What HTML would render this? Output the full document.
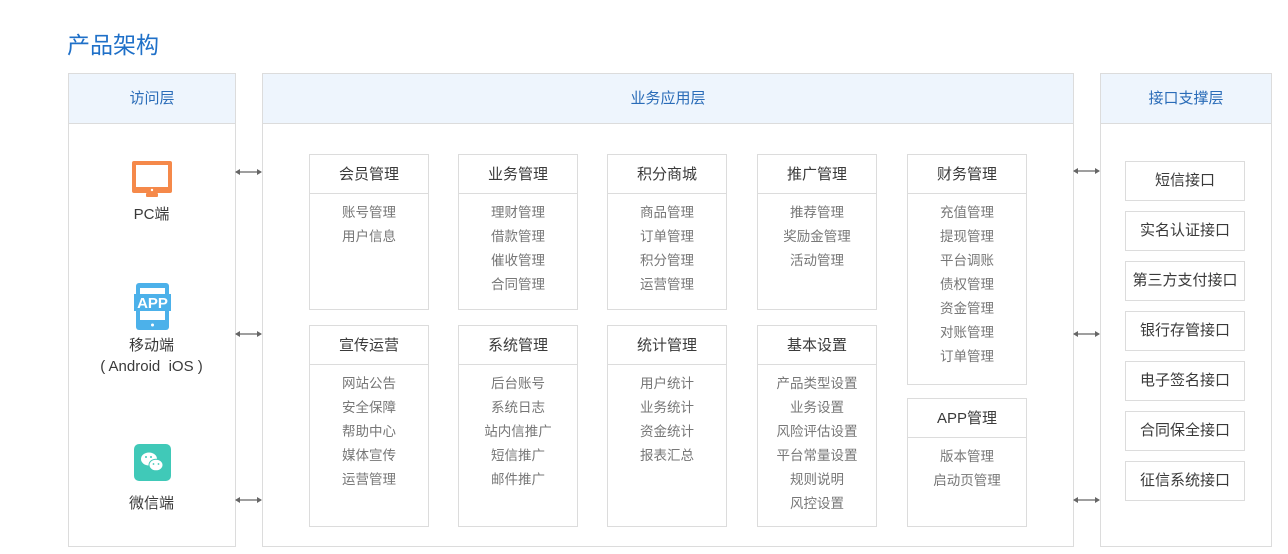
<!DOCTYPE html>
<html><head><meta charset="utf-8"><style>
*{margin:0;padding:0;box-sizing:border-box}
body{width:1288px;height:554px;background:#fff;font-family:"Liberation Sans","Noto Sans CJK SC",sans-serif;position:relative;overflow:hidden}
.a{position:absolute}
.title{left:67px;top:26px;font-size:23px;color:#1f70c8}
.panel{position:absolute;border:1px solid #dcdcdc;top:73px;height:474px}
.ph{height:50px;background:#eef5fd;border-bottom:1px solid #dcdcdc;text-align:center;line-height:50px;font-size:15px;color:#2a6cb8}
.m{position:absolute;border:1px solid #dcdcdc;width:120px;text-align:center}
.mh{height:39px;line-height:39px;border-bottom:1px solid #dcdcdc;font-size:15px;color:#3a3a3a}
.mi{padding-top:7px;font-size:13.5px;color:#777;line-height:24px}
.r{position:absolute;left:1125px;width:120px;height:40px;border:1px solid #dcdcdc;text-align:center;line-height:38px;font-size:15px;color:#3a3a3a}
.lbl{position:absolute;left:68px;width:167px;text-align:center;font-size:15px;color:#3a3a3a}
.arr{position:absolute;width:27px;height:8px}
</style></head><body>
<div class="a title">产品架构</div>
<div class="panel" style="left:68px;width:168px"><div class="ph">访问层</div></div>
<div class="panel" style="left:262px;width:812px"><div class="ph">业务应用层</div></div>
<div class="panel" style="left:1100px;width:172px"><div class="ph">接口支撑层</div></div>

<svg class="a" style="left:132px;top:161px" width="40" height="37" viewBox="0 0 40 37"><rect x="0" y="0" width="40" height="32" rx="2" fill="#f5894a"/><rect x="4" y="4" width="32" height="22" fill="#fff"/><circle cx="20" cy="29" r="1.2" fill="#fff"/><rect x="14" y="32" width="12" height="4" rx="1" fill="#f5894a"/></svg>
<div class="lbl" style="top:203px">PC端</div>
<svg class="a" style="left:134px;top:283px" width="37" height="47" viewBox="0 0 37 47"><rect x="2" y="0" width="33" height="47" rx="3" fill="#4cb1ea"/><rect x="6" y="5" width="25" height="32" fill="#fff"/><rect x="0" y="11" width="37" height="17" fill="#4cb1ea"/><text x="18.5" y="25" font-size="15" font-weight="bold" fill="#fff" text-anchor="middle" font-family="Liberation Sans">APP</text><circle cx="18.5" cy="42" r="1.5" fill="#fff"/></svg>
<div class="lbl" style="top:334px">移动端</div>
<div class="lbl" style="top:358px">( Android&nbsp; iOS )</div>
<svg class="a" style="left:134px;top:444px" width="37" height="37" viewBox="0 0 37 37"><rect width="37" height="37" rx="5" fill="#40c9b8"/><ellipse cx="15" cy="15" rx="8" ry="6.5" fill="#fff"/><ellipse cx="22" cy="21" rx="7" ry="5.8" fill="#fff" stroke="#40c9b8" stroke-width="1"/><circle cx="12" cy="13" r="1" fill="#40c9b8"/><circle cx="17" cy="13" r="1" fill="#40c9b8"/><circle cx="19.5" cy="20" r=".9" fill="#40c9b8"/><circle cx="24.5" cy="20" r=".9" fill="#40c9b8"/></svg>
<div class="lbl" style="top:492px">微信端</div>

<svg class="arr" style="left:235px;top:168px" viewBox="0 0 27 8"><path d="M1 4H26" stroke="#666" stroke-width="1.2"/><path d="M0 4L5 1V7Z M27 4L22 1V7Z" fill="#666"/></svg>
<svg class="arr" style="left:235px;top:330px" viewBox="0 0 27 8"><path d="M1 4H26" stroke="#666" stroke-width="1.2"/><path d="M0 4L5 1V7Z M27 4L22 1V7Z" fill="#666"/></svg>
<svg class="arr" style="left:235px;top:496px" viewBox="0 0 27 8"><path d="M1 4H26" stroke="#666" stroke-width="1.2"/><path d="M0 4L5 1V7Z M27 4L22 1V7Z" fill="#666"/></svg>
<svg class="arr" style="left:1073px;top:167px" viewBox="0 0 27 8"><path d="M1 4H26" stroke="#666" stroke-width="1.2"/><path d="M0 4L5 1V7Z M27 4L22 1V7Z" fill="#666"/></svg>
<svg class="arr" style="left:1073px;top:330px" viewBox="0 0 27 8"><path d="M1 4H26" stroke="#666" stroke-width="1.2"/><path d="M0 4L5 1V7Z M27 4L22 1V7Z" fill="#666"/></svg>
<svg class="arr" style="left:1073px;top:496px" viewBox="0 0 27 8"><path d="M1 4H26" stroke="#666" stroke-width="1.2"/><path d="M0 4L5 1V7Z M27 4L22 1V7Z" fill="#666"/></svg>

<div class="m" style="left:309px;top:154px;height:156px"><div class="mh">会员管理</div><div class="mi">账号管理<br>用户信息</div></div>
<div class="m" style="left:458px;top:154px;height:156px"><div class="mh">业务管理</div><div class="mi">理财管理<br>借款管理<br>催收管理<br>合同管理</div></div>
<div class="m" style="left:607px;top:154px;height:156px"><div class="mh">积分商城</div><div class="mi">商品管理<br>订单管理<br>积分管理<br>运营管理</div></div>
<div class="m" style="left:757px;top:154px;height:156px"><div class="mh">推广管理</div><div class="mi">推荐管理<br>奖励金管理<br>活动管理</div></div>
<div class="m" style="left:907px;top:154px;height:231px"><div class="mh">财务管理</div><div class="mi">充值管理<br>提现管理<br>平台调账<br>债权管理<br>资金管理<br>对账管理<br>订单管理</div></div>
<div class="m" style="left:309px;top:325px;height:202px"><div class="mh">宣传运营</div><div class="mi">网站公告<br>安全保障<br>帮助中心<br>媒体宣传<br>运营管理</div></div>
<div class="m" style="left:458px;top:325px;height:202px"><div class="mh">系统管理</div><div class="mi">后台账号<br>系统日志<br>站内信推广<br>短信推广<br>邮件推广</div></div>
<div class="m" style="left:607px;top:325px;height:202px"><div class="mh">统计管理</div><div class="mi">用户统计<br>业务统计<br>资金统计<br>报表汇总</div></div>
<div class="m" style="left:757px;top:325px;height:202px"><div class="mh">基本设置</div><div class="mi">产品类型设置<br>业务设置<br>风险评估设置<br>平台常量设置<br>规则说明<br>风控设置</div></div>
<div class="m" style="left:907px;top:398px;height:129px"><div class="mh">APP管理</div><div class="mi">版本管理<br>启动页管理</div></div>

<div class="r" style="top:161px">短信接口</div>
<div class="r" style="top:211px">实名认证接口</div>
<div class="r" style="top:261px">第三方支付接口</div>
<div class="r" style="top:311px">银行存管接口</div>
<div class="r" style="top:361px">电子签名接口</div>
<div class="r" style="top:411px">合同保全接口</div>
<div class="r" style="top:461px">征信系统接口</div>
</body></html>
